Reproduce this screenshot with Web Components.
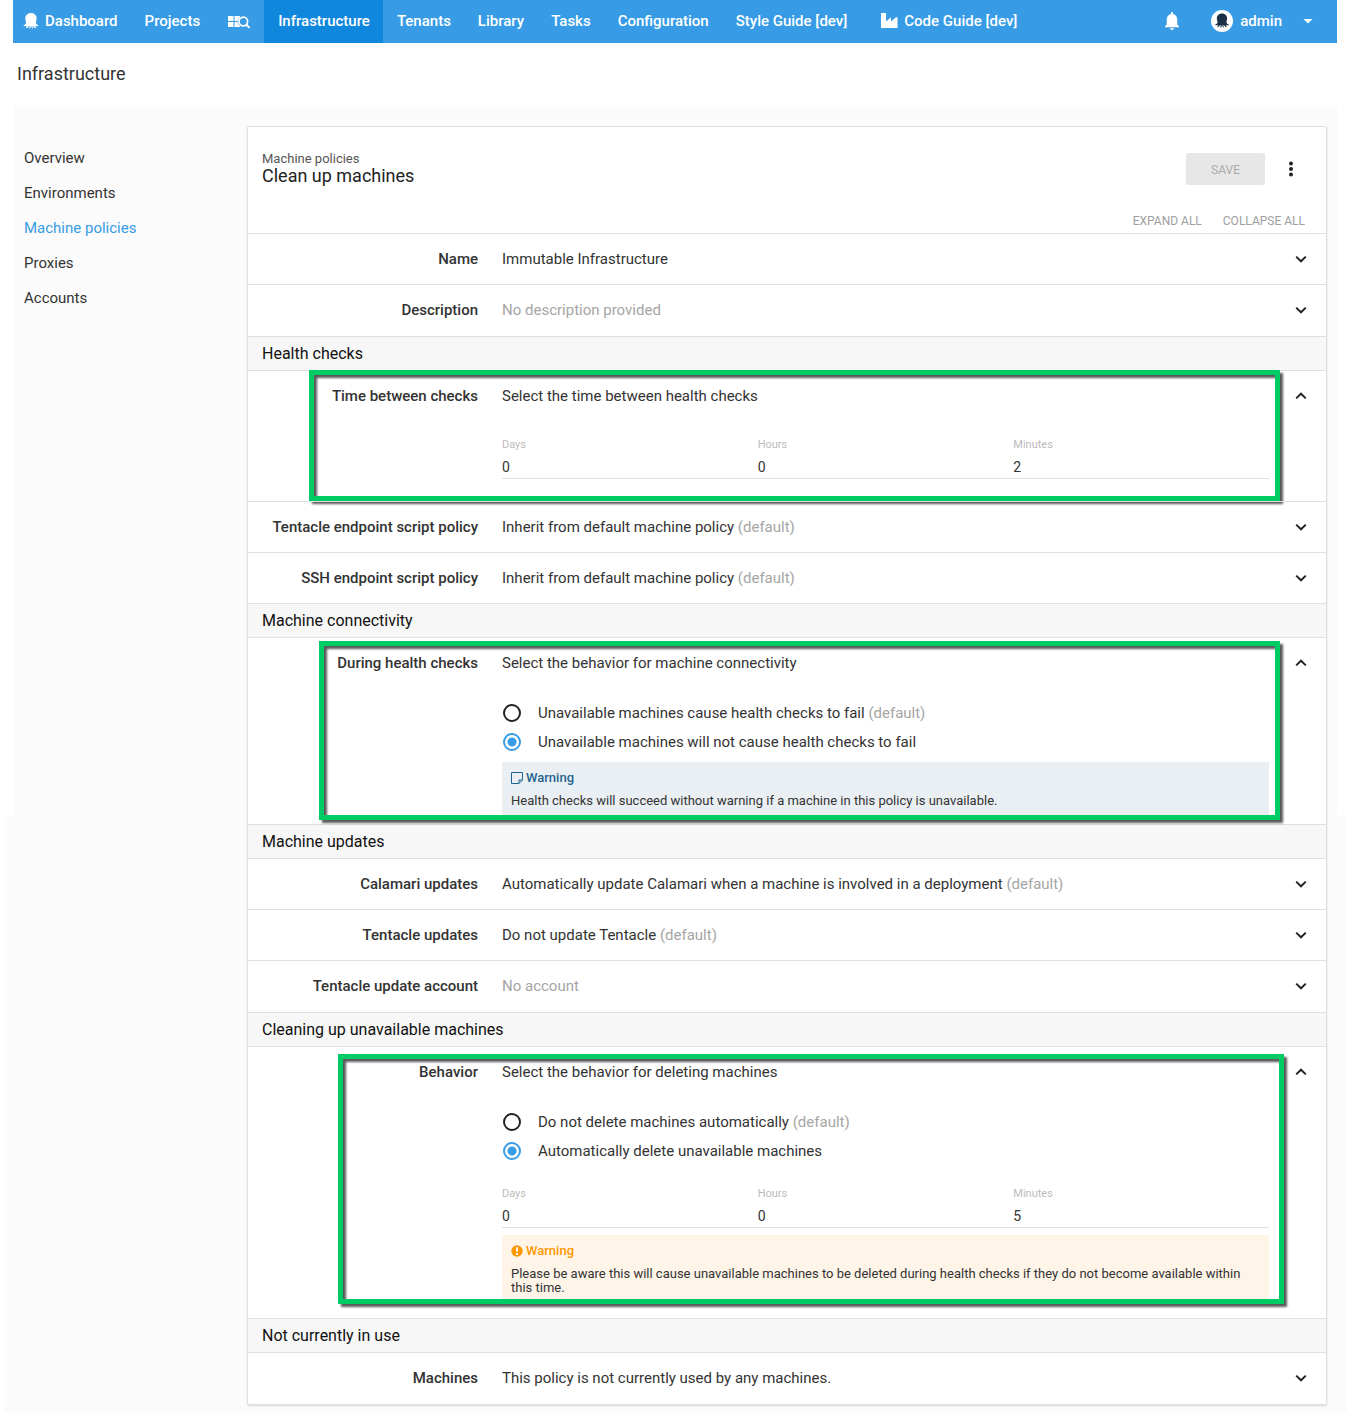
<!DOCTYPE html>
<html lang="en">
<head>
<meta charset="utf-8">
<meta name="viewport" content="width=device-width, initial-scale=1">
<title>Machine policies - Infrastructure</title>
<style>
  body { margin: 0; background: #fff; font-family: Roboto, "Liberation Sans", sans-serif; font-size: 15px; line-height: 20px; color: #333; }
</style>
</head>
<body>
<app-shell>
  <top-bar slot="bar">
    <nav-item><app-icon name="octopus" size="16"></app-icon>Dashboard</nav-item>
    <nav-item>Projects</nav-item>
    <nav-item label="Search"><app-icon name="search" size="22"></app-icon></nav-item>
    <nav-item active>Infrastructure</nav-item>
    <nav-item>Tenants</nav-item>
    <nav-item>Library</nav-item>
    <nav-item>Tasks</nav-item>
    <nav-item>Configuration</nav-item>
    <nav-item>Style Guide [dev]</nav-item>
    <nav-item wide><app-icon name="factory" size="18"></app-icon>Code Guide [dev]</nav-item>
    <user-menu slot="end">admin</user-menu>
  </top-bar>
  <page-title slot="title">Infrastructure</page-title>
  <side-nav slot="side">
    <side-link>Overview</side-link>
    <side-link>Environments</side-link>
    <side-link active>Machine policies</side-link>
    <side-link>Proxies</side-link>
    <side-link>Accounts</side-link>
  </side-nav>
  <policy-card>
    <span slot="crumb">Machine policies</span>
    <span slot="name">Clean up machines</span>
    <policy-row label="Name">Immutable Infrastructure</policy-row>
    <policy-row label="Description" muted>No description provided</policy-row>
    <section-title>Health checks</section-title>
    <policy-row label="Time between checks" open mark="first">Select the time between health checks
      <time-fields slot="detail" days="0" hours="0" minutes="2"></time-fields>
    </policy-row>
    <policy-row label="Tentacle endpoint script policy" default>Inherit from default machine policy</policy-row>
    <policy-row label="SSH endpoint script policy" default>Inherit from default machine policy</policy-row>
    <section-title>Machine connectivity</section-title>
    <policy-row label="During health checks" open mark="second">Select the behavior for machine connectivity
      <radio-list slot="detail" first="Unavailable machines cause health checks to fail" second="Unavailable machines will not cause health checks to fail"></radio-list>
      <note-box slot="detail" kind="info">Health checks will succeed without warning if a machine in this policy is unavailable.</note-box>
    </policy-row>
    <section-title>Machine updates</section-title>
    <policy-row label="Calamari updates" default>Automatically update Calamari when a machine is involved in a deployment</policy-row>
    <policy-row label="Tentacle updates" default>Do not update Tentacle</policy-row>
    <policy-row label="Tentacle update account" muted>No account</policy-row>
    <section-title>Cleaning up unavailable machines</section-title>
    <policy-row label="Behavior" open mark="third">Select the behavior for deleting machines
      <radio-list slot="detail" first="Do not delete machines automatically" second="Automatically delete unavailable machines"></radio-list>
      <time-fields slot="detail" days="0" hours="0" minutes="5"></time-fields>
      <note-box slot="detail" kind="alert">Please be aware this will cause unavailable machines to be deleted during health checks if they do not become available within this time.</note-box>
    </policy-row>
    <section-title>Not currently in use</section-title>
    <policy-row label="Machines">This policy is not currently used by any machines.</policy-row>
  </policy-card>
</app-shell>
<script>
const OCTOPUS = '<path d="M8 0C4.500 0 2.300 2.500 2.300 5.600c0 1.900 1 3 .7 4.400-.2 1.300-1.200 1.900-2.800 2.500 1 .8 2.500.9 3.700.3l-1.100 2.400c1.500-.1 2.400-.8 3.100-2.300h.5L6.300 16c1-.6 1.400-1.600 1.500-3h.5c.1 1.400.6 2.400 1.500 3l-.1-3.100h.5c.7 1.500 1.600 2.200 3.100 2.300l-1.200-2.400c1.200.6 2.700.5 3.700-.3-1.600-.6-2.600-1.200-2.800-2.500-.3-1.400.7-2.500.7-4.400C13.700 2.500 11.500 0 8 0z" fill="currentColor"/>';
const ICONS = {
  octopus: ['0 0 16 16', OCTOPUS],
  search: ['0 0 22 14', '<path d="M0 1h5.500v5H0zM6.500 1h5.500v1.200A6 6 0 0 0 9.800 6H6.500zM0 7h5.500v5H0zM6.500 7h3.200A6 6 0 0 0 12 11.200v.8H6.500z" fill="currentColor"/><circle cx="15.300" cy="6.500" r="4.300" fill="none" stroke="currentColor" stroke-width="1.700"/><path d="M18.300 9.500l3.200 3.400" stroke="currentColor" stroke-width="1.900"/>'],
  factory: ['0 0 18 16', '<path d="M1 0h5v8.500l5-4.300v4.300l5-4.300h1.500V15H1z" fill="currentColor"/>'],
  bell: ['0 0 16 20', '<path d="M8 19a2 2 0 0 0 2-1.700H6A2 2 0 0 0 8 19zM13.300 13.500V8.600c0-2.900-1.600-5.100-4.200-5.700V2a1.100 1.100 0 0 0-2.200 0v.9C4.300 3.500 2.700 5.700 2.700 8.600v4.900L1 15.300v.9h14v-.9z" fill="currentColor"/>'],
  avatar: ['0 0 22 22', '<circle cx="11" cy="11" r="11" fill="#fff"/><g transform="translate(3.800 3.500) scale(.9)" color="#1b3047">' + OCTOPUS + '</g>'],
  caret: ['0 0 10 10', '<path d="M0.500 3h9L5 7.500z" fill="currentColor"/>'],
  dots: ['0 0 16 16', '<g fill="currentColor"><circle cx="8" cy="2.500" r="2"/><circle cx="8" cy="8" r="2"/><circle cx="8" cy="13.500" r="2"/></g>'],
  down: ['0 0 14 14', '<path d="M2.200 4.600L7 9.300l4.800-4.700" fill="none" stroke="currentColor" stroke-width="1.900"/>'],
  up: ['0 0 14 14', '<path d="M2.200 9.400L7 4.700l4.800 4.700" fill="none" stroke="currentColor" stroke-width="1.900"/>'],
  info: ['0 0 12 12', '<path d="M.5.5h11v7.500L8 11.500H.5zM8 11.500V8h3.500" fill="none" stroke="currentColor"/>'],
  alert: ['0 0 12 12', '<circle cx="6" cy="6" r="5.700" fill="currentColor"/><path d="M6 2.200v4.300M6 8v1.900" stroke="#fff" stroke-width="1.900"/>']
};
function define(name, markup) {
  customElements.define(name, class extends HTMLElement {
    constructor() {
      super();
      const root = this.attachShadow({ mode: 'open' });
      root.innerHTML = typeof markup === 'function' ? markup(this) : markup;
    }
  });
}
define('app-icon', el => {
  const [box, body] = ICONS[el.getAttribute('name')];
  return `<style>:host{display:block;flex:none} svg{display:block}</style>
    <svg width="${el.getAttribute('size')}" viewBox="${box}" aria-hidden="true">${body}</svg>`;
});
define('app-shell', `<style>
  :host{display:block;padding-bottom:4px}
  header{margin:0 13px}
  .body{display:flex;padding:21px 23px 8px 13px;
    background:linear-gradient(#fbfbfb,#fbfbfb) 13px 0/calc(100% - 26px) 100% no-repeat,
      linear-gradient(#fbfbfb,#fbfbfb) 4px 100%/calc(100% - 7px) 598px no-repeat}
  .side{flex:0 0 234px}
  main{flex:1;min-width:0}
  </style>
  <header><slot name="bar"></slot><slot name="title"></slot></header>
  <div class="body"><div class="side"><slot name="side"></slot></div><main><slot></slot></main></div>`);
define('top-bar', `<style>
  :host{display:flex;justify-content:space-between;height:43px;background:#379ce5;color:#fff}
  nav{display:flex}
  </style><nav><slot></slot></nav><slot name="end"></slot>`);
define('nav-item', el => `<style>
  :host{display:flex}
  a{display:flex;align-items:center;gap:6px;padding:0 13px 1px 14px;color:inherit;text-decoration:none;font-size:15px;font-weight:500;white-space:nowrap}
  :host([active]) a{background:#0f87dc}
  :host(:first-child) a{padding-left:10px}
  :host([label]) a{padding:0 14px 0 15px}
  :host([wide]) a{padding-left:20px}
  </style><a href="#"${el.hasAttribute('label') ? ` aria-label="${el.getAttribute('label')}"` : ''}><slot></slot></a>`);
define('user-menu', `<style>
  :host{display:flex;align-items:center;gap:31px;padding:0 24px 2px 0}
  button{display:flex;align-items:center;gap:7px;border:0;padding:0;background:none;color:inherit;font:500 15px/20px Roboto,sans-serif}
  app-icon:last-child{margin-left:14px}
  button:first-of-type app-icon{margin-left:0}
  </style><button aria-label="Notifications"><app-icon name="bell" size="16"></app-icon></button>
  <button><app-icon name="avatar" size="22"></app-icon><slot></slot><app-icon name="caret" size="10"></app-icon></button>`);
define('page-title', `<style>
  :host{display:block;padding:19px 4px}
  h1{margin:0;font-size:18px;line-height:24px;font-weight:400}
  </style><h1><slot></slot></h1>`);
define('side-nav', `<style>nav{display:flex;flex-direction:column;gap:15px;padding:22px 11px}</style><nav><slot></slot></nav>`);
define('side-link', `<style>
  :host{display:block} a{color:#333;text-decoration:none;font-size:15px} :host([active]) a{color:#379ce5}
  </style><a href="#"><slot></slot></a>`);
define('policy-card', `<style>
  :host{display:block;background:#fff;border:1px solid #e0e0e0;box-sizing:border-box;border-radius:2px;box-shadow:0 1px 2px rgba(0,0,0,.15)}
  .head{display:flex;justify-content:space-between;padding:25px 14px 0}
  p{margin:0;font-size:13px;line-height:14px;color:#555}
  h2{margin:0;font-size:18px;line-height:20px;font-weight:400;color:#222}
  .act{display:flex;align-items:center;gap:12px;height:34px;padding-right:8px}
  button{border:0;background:none;padding:0;font:12px/16px Roboto,sans-serif;color:#9e9e9e}
  .save{width:79px;height:32px;padding-top:1px;background:#e7e7e7;border-radius:2px;color:#aaa}
  .more{width:27px;display:flex;justify-content:center;color:#222}
  .all{display:flex;justify-content:flex-end;gap:21px;padding:27px 21px 4px}
  ::slotted(policy-row[muted]),::slotted(policy-row:last-of-type){padding-bottom:1px}
  </style>
  <div class="head"><div><p><slot name="crumb"></slot></p><h2><slot name="name"></slot></h2></div>
  <div class="act"><button class="save" disabled>SAVE</button><button class="more" aria-label="More"><app-icon name="dots" size="16"></app-icon></button></div></div>
  <div class="all"><button>EXPAND ALL</button><button>COLLAPSE ALL</button></div>
  <slot></slot>`);
define('section-title', `<style>
  :host{display:block;border-top:1px solid #e0e0e0;background:#f7f7f7;padding:7px 14px 6px}
  h3{margin:0;font-size:16px;line-height:20px;font-weight:400;color:#111}
  </style><h3><slot></slot></h3>`);
define('policy-row', el => `<style>
  :host{display:block;position:relative;border-top:1px solid #e0e0e0}
  .line{display:grid;grid-template-columns:230px 1fr 50px;padding:15px 0}
  strong{font-size:15px;font-weight:500;text-align:right}
  .value{padding:0 7px 0 24px;font-size:15px}
  :host([muted]) .value,.value i{color:#a5a5a5;font-style:normal}
  button{display:flex;align-items:center;justify-content:center;border:0;background:none;padding:0;color:#222}
  .detail{padding:0 57px 0 254px}
  .frame{position:absolute;border:5px solid #0c6;filter:drop-shadow(3px 3px 1px rgba(0,0,0,.65));pointer-events:none}
  .first{inset:-1px 46px 0 61px}
  .second{inset:3px 46px 4px 71px}
  .third{inset:7px 42px 14px 90px}
  :host([mark=first]) .detail{padding-bottom:22px}
  :host([mark=second]) .detail{padding-bottom:8px}
  :host([mark=third]) .detail{padding-bottom:15px}
  </style>
  <div class="line"><strong>${el.getAttribute('label')}</strong>
  <div class="value"><slot></slot>${el.hasAttribute('default') ? ' <i>(default)</i>' : ''}</div>
  <button aria-label="Toggle ${el.getAttribute('label')}"><app-icon name="${el.hasAttribute('open') ? 'up' : 'down'}" size="14"></app-icon></button></div>
  ${el.hasAttribute('open') ? '<div class="detail"><slot name="detail"></slot></div>' : ''}
  ${el.hasAttribute('mark') ? `<div class="frame ${el.getAttribute('mark')}"></div>` : ''}`);
define('time-fields', el => `<style>
  :host{display:grid;grid-template-columns:repeat(3,1fr);padding-top:17px;border-bottom:1px solid #e0e0e0}
  div{display:flex;flex-direction:column}
  label{font-size:11px;line-height:14px;color:#bbb}
  input{border:0;outline:0;margin:0;padding:5px 0 1px;width:100%;box-sizing:border-box;background:none;font:14px/20px Roboto,sans-serif;color:#333}
  </style>` + ['Days', 'Hours', 'Minutes'].map(u => `<div><label for="${u}">${u}</label><input id="${u}" value="${el.getAttribute(u.toLowerCase())}"></div>`).join(''));
define('radio-list', el => `<style>
  :host{display:flex;flex-direction:column;gap:9px;padding:15px 0 9px}
  label{display:flex;align-items:center;gap:17px;font-size:15px;line-height:20px}
  input{appearance:none;margin:0 0 0 1px;width:18px;height:18px;border:2px solid #222;border-radius:50%;flex:none}
  input:checked{border-color:#379ce5;background:radial-gradient(#379ce5 4px,transparent 5px)}
  i{color:#a5a5a5;font-style:normal}
  </style>
  <label><input type="radio" name="choice"><span>${el.getAttribute('first')} <i>(default)</i></span></label>
  <label><input type="radio" name="choice" checked><span>${el.getAttribute('second')}</span></label>`);
define('note-box', el => `<style>
  :host{display:block;margin-top:1px;padding:9px 9px 8px;font-size:13px;line-height:14px;background:#eaeff3}
  :host([kind=alert]){background:#fff4e8;margin-top:7px}
  strong{display:flex;align-items:center;gap:3px;margin-bottom:9px;font-weight:500;color:#1f6490}
  :host([kind=alert]) strong{color:#ff9800}
  p{margin:0}
  </style><strong><app-icon name="${el.getAttribute('kind')}" size="12"></app-icon>Warning</strong><p><slot></slot></p>`);
</script>
</body>
</html>
